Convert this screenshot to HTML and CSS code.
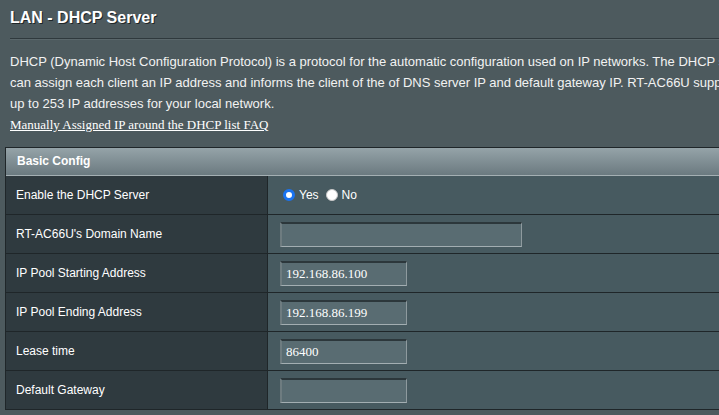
FILE: index.html
```html
<!DOCTYPE html>
<html>
<head>
<meta charset="utf-8">
<link rel="stylesheet" href="styles.css">
</head>
<body>
<div class="page">
  <h1 class="title">LAN - DHCP Server</h1>
  <div class="divider"></div>
  <p class="desc">DHCP (Dynamic Host Configuration Protocol) is a protocol for the automatic configuration used on IP networks. The DHCP server<br>can assign each client an IP address and informs the client of the of DNS server IP and default gateway IP. RT-AC66U supports<br>up to 253 IP addresses for your local network.</p>
  <a class="faq" href="#">Manually Assigned IP around the DHCP list FAQ</a>
  <div class="config">
    <div class="config-head">Basic Config</div>
    <div class="row">
      <div class="label">Enable the DHCP Server</div>
      <div class="value">
        <label class="radio"><input type="radio" name="dhcp" checked><span>Yes</span></label>
        <label class="radio"><input type="radio" name="dhcp"><span>No</span></label>
      </div>
    </div>
    <div class="row">
      <div class="label">RT-AC66U's Domain Name</div>
      <div class="value"><input class="field wide" type="text" value=""></div>
    </div>
    <div class="row">
      <div class="label">IP Pool Starting Address</div>
      <div class="value"><input class="field" type="text" value="192.168.86.100"></div>
    </div>
    <div class="row">
      <div class="label">IP Pool Ending Address</div>
      <div class="value"><input class="field" type="text" value="192.168.86.199"></div>
    </div>
    <div class="row">
      <div class="label">Lease time</div>
      <div class="value"><input class="field" type="text" value="86400"></div>
    </div>
    <div class="row">
      <div class="label">Default Gateway</div>
      <div class="value"><input class="field" type="text" value=""></div>
    </div>
  </div>
</div>
</body>
</html>
```

FILE: styles.css
```css
html, body {
  margin: 0;
  padding: 0;
  background: #4d5a5e;
  overflow: hidden;
}
.page {
  width: 780px;
  font-family: "Liberation Sans", Arial, sans-serif;
  color: #ffffff;
}
.title {
  margin: 0;
  padding: 8px 0 0 10px;
  font-size: 16px;
  line-height: 20px;
  font-weight: bold;
  color: #ffffff;
  text-shadow: 1px 1px 0 #1f2628;
}
.divider {
  margin: 10px 0 0 10px;
  height: 0;
  border-top: 1px solid #2f393d;
  border-bottom: 1px solid #5a676b;
}
.desc {
  margin: 11px 0 0 10px;
  font-size: 13px;
  line-height: 21px;
  white-space: nowrap;
  color: #f2f2f2;
}
.faq {
  display: block;
  margin-left: 10px;
  font-family: "Liberation Serif", "Times New Roman", serif;
  font-size: 13px;
  line-height: 21px;
  color: #ffffff;
  text-decoration: underline;
}
.config {
  margin: 12px 0 0 5px;
  border: 1px solid #1f2629;
  border-right: none;
}
.config-head {
  height: 27px;
  line-height: 27px;
  padding-left: 11px;
  font-size: 12px;
  font-weight: bold;
  color: #ffffff;
  background: linear-gradient(#95a3a8, #6b7a80);
  border-bottom: 1px solid #a4afb3;
}
.row {
  display: flex;
  height: 38px;
  border-top: 1px solid #1f2629;
}
.config-head + .row {
  border-top: none;
}
.label {
  width: 251px;
  padding-left: 10px;
  display: flex;
  align-items: center;
  font-size: 12px;
  color: #ffffff;
  background: #2f3a3f;
  border-right: 1px solid #1f2629;
}
.value {
  flex: 1;
  display: flex;
  align-items: center;
  padding-left: 12px;
  background: #475a60;
}
.field {
  box-sizing: border-box;
  width: 127px;
  height: 25px;
  margin: 0;
  padding: 0 0 0 4px;
  background: #596c72;
  border-style: solid;
  border-width: 2px 1px 1px 2px;
  border-color: #2c373b #8e9a9e #a3aeb2 #6e7c80;
  font-family: "Liberation Serif", "Times New Roman", serif;
  font-size: 13px;
  color: #ffffff;
  outline: none;
}
.field.wide {
  width: 242px;
}
.radio {
  display: flex;
  align-items: center;
  font-size: 12px;
  color: #ffffff;
  margin-right: 4px;
}
.radio input {
  -webkit-appearance: none;
  appearance: none;
  box-sizing: border-box;
  width: 12px;
  height: 12px;
  margin: 0 4px 0 3px;
  border-radius: 50%;
  background: #ffffff;
  border: 1px solid #c8c8c8;
}
.radio input:checked {
  border: 3.5px solid #1a73f0;
  background: #ffffff;
}
```
